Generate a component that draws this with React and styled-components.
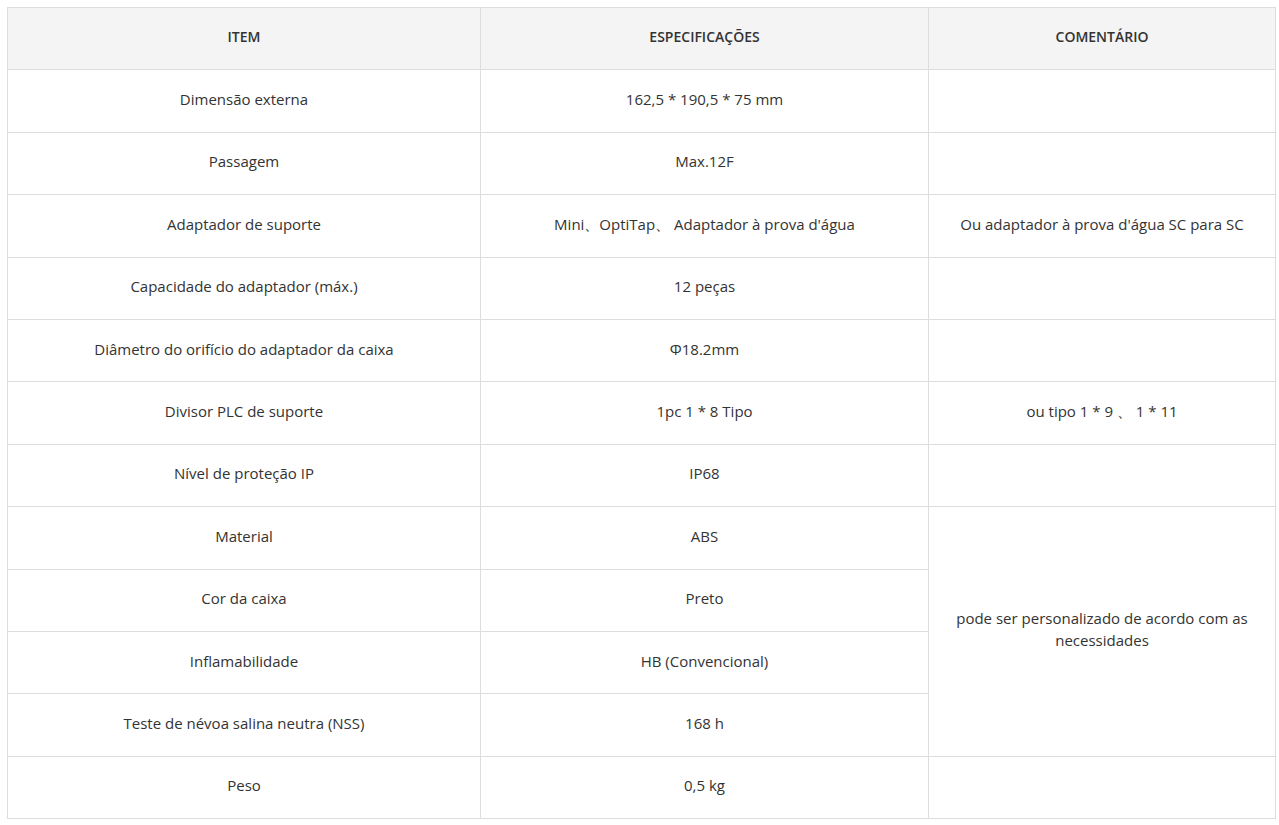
import styled, { createGlobalStyle } from "styled-components";

const GlobalStyle = createGlobalStyle`
  body {
    margin: 0;
    padding: 7px 4px 0 7px;
    background: #fff;
    font-family: "Open Sans", "Liberation Sans", sans-serif;
  }
`;

const rows = [
  { item: "Dimensão externa", spec: "162,5 * 190,5 * 75 mm", note: "" },
  { item: "Passagem", spec: "Max.12F", note: "" },
  { item: "Adaptador de suporte", spec: "Mini、OptiTap、 Adaptador à prova d'água", note: "Ou adaptador à prova d'água SC para SC" },
  { item: "Capacidade do adaptador (máx.)", spec: "12 peças", note: "" },
  { item: "Diâmetro do orifício do adaptador da caixa", spec: "Φ18.2mm", note: "" },
  { item: "Divisor PLC de suporte", spec: "1pc 1 * 8 Tipo", note: "ou tipo 1 * 9 、 1 * 11" },
  { item: "Nível de proteção IP", spec: "IP68", note: "" },
  { item: "Material", spec: "ABS", note: "pode ser personalizado de acordo com as necessidades", span: 4 },
  { item: "Cor da caixa", spec: "Preto", skip: true },
  { item: "Inflamabilidade", spec: "HB (Convencional)", skip: true },
  { item: "Teste de névoa salina neutra (NSS)", spec: "168 h", skip: true },
  { item: "Peso", spec: "0,5 kg", note: "" },
];

export default function App() {
  return (
    <>
      <GlobalStyle />
      <SpecTable>
        <colgroup>
          <col style={{ width: 473 }} />
          <col style={{ width: 448 }} />
          <col style={{ width: 347 }} />
        </colgroup>
        <thead>
          <tr>
            <HeadCell>ITEM</HeadCell>
            <HeadCell>ESPECIFICAÇÕES</HeadCell>
            <HeadCell>COMENTÁRIO</HeadCell>
          </tr>
        </thead>
        <tbody>
          {rows.map((r, i) => (
            <tr key={i}>
              <Cell>{r.item}</Cell>
              <Cell>{r.spec}</Cell>
              {!r.skip && <Cell rowSpan={r.span || 1}>{r.note}</Cell>}
            </tr>
          ))}
        </tbody>
      </SpecTable>
    </>
  );
}

const SpecTable = styled.table`
  width: 1268px;
  border-collapse: collapse;
  table-layout: fixed;
  color: #333;
  font-size: 15px;
`;

const HeadCell = styled.th`
  background: #f4f4f4;
  border: 1px solid #dddddd;
  height: 62.4px;
  padding: 0 10px 4px;
  font-size: 14px;
  font-weight: 600;
  color: #333;
  text-align: center;
  vertical-align: middle;
  box-sizing: border-box;
`;

const Cell = styled.td`
  border: 1px solid #dddddd;
  height: 62.4px;
  padding: 0 10px 4px;
  line-height: 22px;
  text-align: center;
  vertical-align: middle;
  box-sizing: border-box;
`;
